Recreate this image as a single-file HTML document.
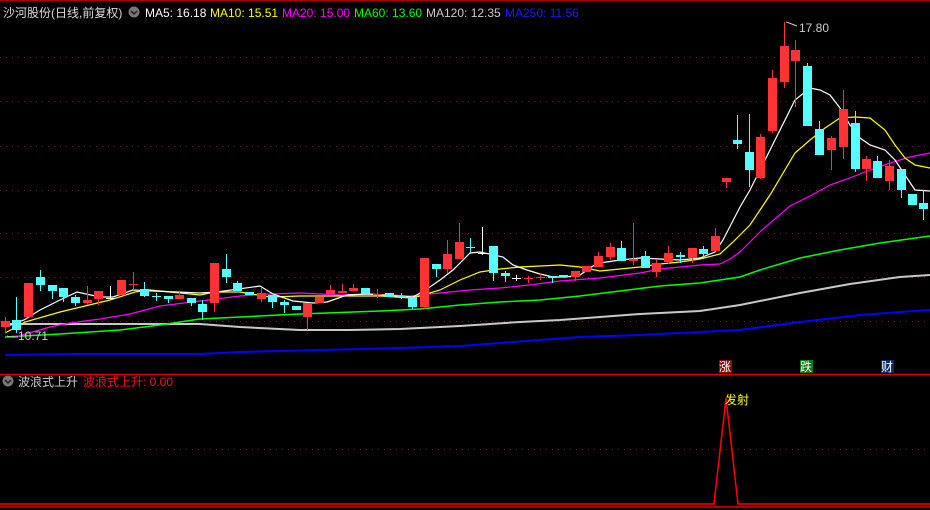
<!DOCTYPE html>
<html><head><meta charset="utf-8"><style>
html,body{margin:0;padding:0;background:#000;width:930px;height:510px;overflow:hidden}
svg{display:block}
text{font-family:"Liberation Sans","Noto Sans CJK SC",sans-serif;font-size:12px}
</style></head><body>
<svg id="s" width="930" height="510" viewBox="0 0 930 510" xmlns="http://www.w3.org/2000/svg">
<rect width="930" height="510" fill="#000"/>
<line x1="0" y1="0.5" x2="930" y2="0.5" stroke="#a00" stroke-width="1"/>
<g stroke="#8a1a1a" stroke-width="1" stroke-dasharray="1,5">
<line x1="0" y1="57.5" x2="930" y2="57.5"/><line x1="0" y1="101.5" x2="930" y2="101.5"/>
<line x1="0" y1="146.5" x2="930" y2="146.5"/><line x1="0" y1="190.5" x2="930" y2="190.5"/>
<line x1="0" y1="233.5" x2="930" y2="233.5"/><line x1="0" y1="277.5" x2="930" y2="277.5"/>
<line x1="0" y1="321.5" x2="930" y2="321.5"/><line x1="0" y1="449.5" x2="930" y2="449.5"/>
</g>
<g id="lines" fill="none" stroke-width="1.2">
<polyline stroke="#0000ff" stroke-width="2" points="5,355 80,354 200,354 240,352 320,350 400,348 460,346 580,337 640,335 700,332 740,330 800,322 860,315 930,310"/>
<polyline stroke="#c8c8c8" stroke-width="2" points="5,324 200,324 240,327 300,330 350,330 400,329 460,326 520,322 560,320 600,317 640,314 700,311 740,305 800,293 850,284 900,277 930,275"/>
<polyline stroke="#00ff00" stroke-width="1.5" points="5,337 60,334 120,330 160,325 200,319 240,317 300,314 380,311 420,309 460,305 500,302 540,300 580,296 620,291 660,286 700,283 740,277 760,270 800,258 840,250 880,243 930,236"/>
<polyline stroke="#ff00ff" points="15,337 50,327 70,323 100,319 130,314 160,306 200,301 240,296 270,294 300,293 340,295 370,294 410,296 440,293 470,290 500,288 530,285 560,281 600,278 640,273 660,269 700,265 720,264 730,259 740,252 762,230 790,206 810,196 830,185 850,178 870,170 890,163 910,157 930,153"/>
<polyline stroke="#ffff00" points="5,333 25,322 60,312 110,300 135,292 150,290 200,295 215,292 240,292 270,297 300,296 380,296 410,298 420,296 440,290 460,280 480,272 500,269 520,267 560,265 580,267 600,271 620,269 640,267 660,264 680,262 700,259 720,254 733,242 750,225 770,195 795,153 810,140 825,128 840,118 855,117 870,118 885,130 895,145 905,158 915,165 930,168"/>
<polyline stroke="#ffffff" points="5,327 24,320 40,310 60,300 77,292 100,297 113,297 133,290 153,291 200,293 217,292 260,286 273,294 293,301 313,303 327,302 347,295 367,294 413,297 427,289 440,280 453,270 470,253 480,252 503,257 513,265 527,270 540,274 553,277 566,277 580,275 593,266 600,263 620,260 640,258 660,259 680,260 700,258 715,252 723,240 740,207 750,190 760,170 780,130 795,100 810,88 820,90 830,95 840,108 850,125 860,138 870,145 885,150 895,160 905,175 915,190 930,191"/>
</g>
<g id="c"></g>
<polyline fill="none" stroke="#ccc" points="786,22 789,23 797,26"/>
<text x="799" y="32" fill="#ccc">17.80</text>
<polyline fill="none" stroke="#ccc" points="7,336 10,337 18,337"/>
<text x="18" y="340" fill="#ccc">10.71</text>
<text x="3" y="17" fill="#ddd">沙河股份(日线,前复权)</text>
<circle cx="134" cy="12" r="5.5" fill="#777"/>
<polyline points="131,11 134,14 137,11" fill="none" stroke="#222" stroke-width="1.5"/>
<text x="145" y="17" fill="#fff">MA5: 16.18</text>
<text x="210" y="17" fill="#ffff00">MA10: 15.51</text>
<text x="282" y="17" fill="#ff00ff">MA20: 15.00</text>
<text x="354" y="17" fill="#00ff00">MA60: 13.60</text>
<text x="426" y="17" fill="#ccc">MA120: 12.35</text>
<text x="505" y="17" fill="#1a1aff">MA250: 11.56</text>
<rect x="719" y="360" width="13" height="13" fill="#8b0a0a"/><text x="719" y="371" fill="#fff">涨</text>
<rect x="800" y="360" width="13" height="13" fill="#0a7a0a"/><text x="800" y="371" fill="#fff">跌</text>
<rect x="881" y="360" width="13" height="13" fill="#0a2a6a"/><text x="881" y="371" fill="#fff">财</text>
<line x1="0" y1="374.5" x2="930" y2="374.5" stroke="#d00" stroke-width="1.5"/>
<circle cx="8" cy="381" r="5.5" fill="#777"/>
<polyline points="5,380 8,383 11,380" fill="none" stroke="#222" stroke-width="1.5"/>
<text x="18" y="386" fill="#ccc">波浪式上升</text>
<text x="83" y="386" fill="#ff1010">波浪式上升: 0.00</text>
<polyline fill="none" stroke="#f00" stroke-width="1.5" points="0,504 714,504 726,398 738,504 930,504"/>
<line x1="0" y1="507" x2="930" y2="507" stroke="#d00" stroke-width="1.5"/>
<text x="725" y="404" fill="#ffff00">发射</text>
</svg>
<script>
var R='#ff3333',C='#55ffff',W='#ffffff';
var d=[[5,321,327,317,333,R],[16,320,330,297,333,C],[28,283,317,283,317,R],[40,277,285,270,291,C],[52,285,291,285,299,C],[63,288,297,288,302,C],[75,297,303,295,306,C],[87,300,303,286,305,R],[98,291,299,291,305,R],[110,298,299,286,299,W],[121,280,295,280,295,R],[133,284,285,272,290,R],[144,289,296,282,297,C],[156,296,297,293,301,C],[168,296,299,296,303,C],[179,295,299,292,299,R],[191,298,303,298,306,C],[202,304,312,300,320,C],[214,263,303,263,312,R],[226,269,277,254,283,C],[237,283,291,281,291,C],[249,292,295,292,295,C],[261,293,299,288,302,R],[272,295,302,295,308,C],[284,302,305,300,313,C],[296,306,310,306,310,C],[307,303,317,303,330,R],[319,297,303,297,303,R],[330,290,294,285,294,R],[342,291,293,284,293,R],[353,288,291,284,291,R],[365,288,294,288,294,C],[377,294,295,289,298,R],[389,293,297,293,297,C],[401,296,297,293,299,C],[412,297,307,297,309,C],[424,258,307,258,309,R],[436,264,269,264,277,C],[447,254,269,240,273,R],[459,242,259,223,259,R],[470,247,248,238,253,C],[482,253,254,227,255,W],[493,246,273,246,281,C],[505,273,276,271,282,C],[516,278,279,275,281,W],[528,278,279,276,283,R],[540,277,278,273,280,R],[552,276,278,276,283,C],[563,275,277,275,277,C],[575,271,277,271,281,R],[586,266,272,266,272,R],[598,256,267,252,267,R],[610,247,257,243,260,R],[621,248,261,241,261,C],[633,259,261,223,265,R],[645,256,268,251,268,C],[656,263,272,260,277,R],[668,253,262,246,264,R],[680,255,257,252,263,C],[692,248,258,248,263,R],[703,249,254,246,259,C],[715,236,251,228,251,R],[726,178,182,178,188,R],[737,140,144,115,149,C],[749,152,170,114,187,C],[760,137,178,134,179,R],[772,78,131,70,133,R],[784,46,82,22,88,R],[795,50,61,40,107,R],[807,66,126,63,126,C],[819,129,155,121,155,C],[831,138,150,136,170,R],[843,109,147,90,159,R],[855,123,169,111,172,C],[866,159,169,156,181,R],[877,161,178,156,178,C],[889,166,181,160,190,R],[901,169,190,169,198,C],[912,194,205,194,205,C],[923,203,209,190,220,C]];
var g=document.getElementById('c'),ns='http://www.w3.org/2000/svg',h='';
d.forEach(function(a){var x=a[0],c=a[5];
h+='<line x1="'+(x+0.5)+'" y1="'+a[3]+'" x2="'+(x+0.5)+'" y2="'+a[4]+'" stroke="'+c+'" stroke-width="1"/>';
var ht=Math.max(1,a[2]-a[1]);h+='<rect x="'+(x-4)+'" y="'+a[1]+'" width="9" height="'+ht+'" fill="'+c+'"/>';});
g.innerHTML=h;
</script>
</body></html>
